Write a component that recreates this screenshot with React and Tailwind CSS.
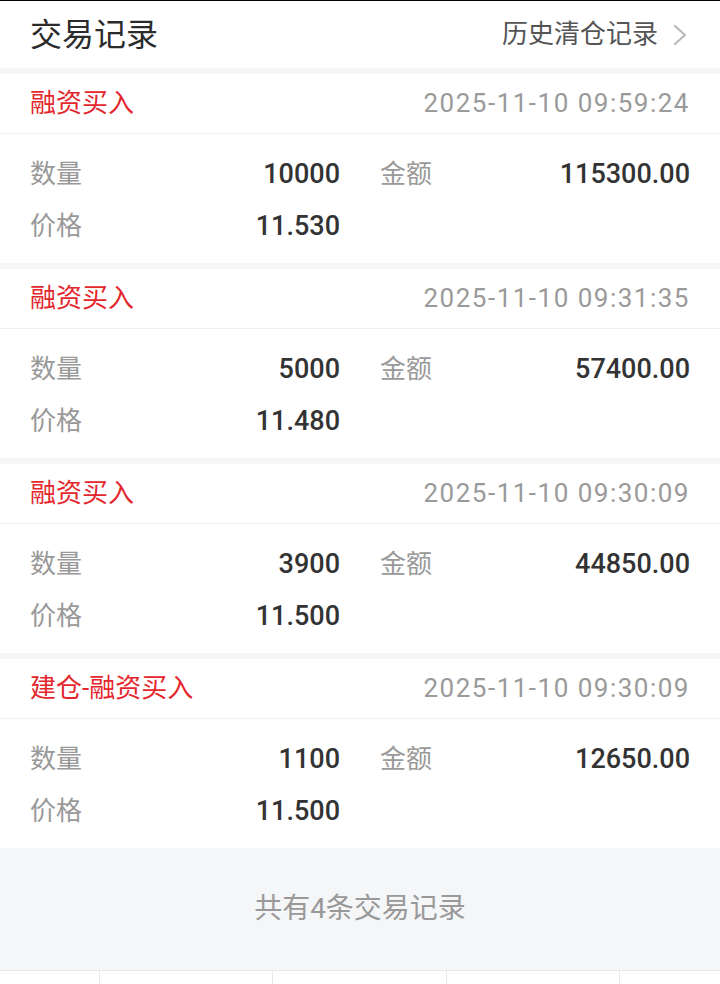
import React from "react";

const trades = [
  { type: "融资买入", time: "2025-11-10 09:59:24", qty: "10000", amount: "115300.00", price: "11.530" },
  { type: "融资买入", time: "2025-11-10 09:31:35", qty: "5000", amount: "57400.00", price: "11.480" },
  { type: "融资买入", time: "2025-11-10 09:30:09", qty: "3900", amount: "44850.00", price: "11.500" },
  { type: "建仓-融资买入", time: "2025-11-10 09:30:09", qty: "1100", amount: "12650.00", price: "11.500" },
];

const font = { fontFamily: 'Roboto, "Noto Sans CJK SC", sans-serif' };

const TradeCard = ({ trade }) => (
  <div className="bg-white">
    <div className="h-[60px] px-[30px] flex items-center justify-between border-b border-[#f1f1f1]">
      <span className="text-[26px] text-[#e4262d]">{trade.type}</span>
      <span className="text-[26px] text-[#9a9a9a] tracking-[1.5px]">{trade.time}</span>
    </div>
    <div className="px-[30px] pt-[14px] pb-[11px] grid grid-cols-2 gap-x-[40px]">
      <div className="h-[52px] flex items-center justify-between">
        <span className="text-[26px] text-[#999]">数量</span>
        <span className="text-[27px] font-medium text-[#333]">{trade.qty}</span>
      </div>
      <div className="h-[52px] flex items-center justify-between">
        <span className="text-[26px] text-[#999]">金额</span>
        <span className="text-[27px] font-medium text-[#333]">{trade.amount}</span>
      </div>
      <div className="h-[52px] flex items-center justify-between">
        <span className="text-[26px] text-[#999]">价格</span>
        <span className="text-[27px] font-medium text-[#333]">{trade.price}</span>
      </div>
    </div>
  </div>
);

const App = () => {
  return (
    <div className="w-[720px] h-[984px] bg-[#f5f6f8] flex flex-col overflow-hidden" style={font}>
      <div className="h-px bg-black" />
      <div className="bg-white h-[67px] pl-[30px] pr-[32px] flex items-center justify-between">
        <span className="text-[32px] text-[#2b2b2b]">交易记录</span>
        <div className="flex items-center gap-[14px]">
          <span className="text-[26px] text-[#555]">历史清仓记录</span>
          <svg width="16" height="24" viewBox="0 0 16 24" fill="none">
            <path d="M3 3 L13 12 L3 21" stroke="#b8b8b8" strokeWidth="2.2" strokeLinecap="round" strokeLinejoin="round" />
          </svg>
        </div>
      </div>
      <div className="flex flex-col gap-[6px] pt-[6px]">
        {trades.map((t, i) => (
          <TradeCard key={i} trade={t} />
        ))}
      </div>
      <div className="h-[122px] flex items-center justify-center">
        <span className="text-[28px] text-[#999]">共有4条交易记录</span>
      </div>
      <div className="flex-1 bg-white border-t border-[#e8e8e8] flex">
        <div className="w-[100px] border-r border-[#e8e8e8]" />
        <div className="w-[173px] border-r border-[#e8e8e8]" />
        <div className="w-[174px] border-r border-[#e8e8e8]" />
        <div className="w-[173px] border-r border-[#e8e8e8]" />
        <div className="flex-1" />
      </div>
    </div>
  );
};

export default App;
